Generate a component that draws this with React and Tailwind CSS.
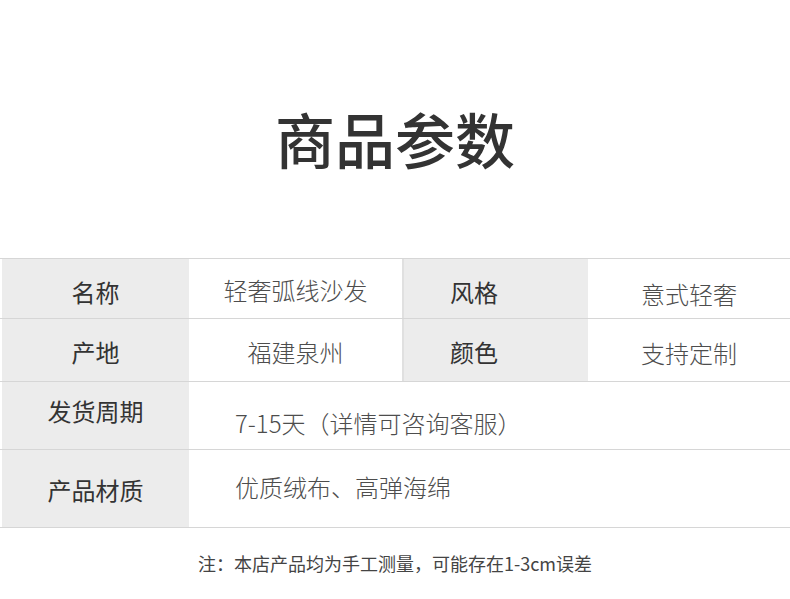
import React from 'react';

const font = { fontFamily: '"Noto Sans CJK SC", "Noto Sans", sans-serif' };

const App = () => {
  return (
    <div style={font} className="w-[790px] h-[599px] bg-white overflow-hidden text-[#333]">
      {/* Title */}
      <div className="h-[258px] pt-[108px] text-center">
        <h1 className="text-[60px] leading-none font-medium text-[#333]">商品参数</h1>
      </div>

      {/* Params table */}
      <div className="border-t border-[#d6d6d6]">
        {/* row 1 */}
        <div className="flex h-[60px] border-b border-[#d6d6d6]">
          <div className="ml-[2px] w-[187px] bg-[#ececec] flex items-center justify-center pt-[7px] text-[24px]">名称</div>
          <div className="w-[213px] flex items-center justify-center pt-[2px] text-[24px] font-light text-[#4d4d4d]">轻奢弧线沙发</div>
          <div className="w-[2px] bg-[#e0e0e0]"></div>
          <div className="w-[184px] bg-[#ececec] flex items-center pl-[46px] pt-[7px] text-[24px]">风格</div>
          <div className="flex-1 flex items-center justify-center pt-[11px] text-[24px] font-light text-[#4d4d4d]">意式轻奢</div>
        </div>
        {/* row 2 */}
        <div className="flex h-[63px] border-b border-[#d6d6d6]">
          <div className="ml-[2px] w-[187px] bg-[#ececec] flex items-center justify-center pt-[4px] text-[24px]">产地</div>
          <div className="w-[213px] flex items-center justify-center pt-[4px] text-[24px] font-light text-[#4d4d4d]">福建泉州</div>
          <div className="w-[2px] bg-[#e0e0e0]"></div>
          <div className="w-[184px] bg-[#ececec] flex items-center pl-[46px] pt-[4px] text-[24px]">颜色</div>
          <div className="flex-1 flex items-center justify-center pt-[6px] text-[24px] font-light text-[#4d4d4d]">支持定制</div>
        </div>
        {/* row 3 */}
        <div className="flex h-[68px] border-b border-[#d6d6d6]">
          <div className="ml-[2px] w-[187px] bg-[#ececec] flex items-center justify-center pb-[10px] text-[24px]">发货周期</div>
          <div className="flex-1 flex items-center pl-[46px] pt-[15px] text-[24px] font-light text-[#4d4d4d]">7-15天（详情可咨询客服）</div>
        </div>
        {/* row 4 */}
        <div className="flex h-[78px] border-b border-[#d6d6d6]">
          <div className="ml-[2px] w-[187px] bg-[#ececec] flex items-center justify-center pt-[2px] text-[24px]">产品材质</div>
          <div className="flex-1 flex items-center pl-[46px] pb-[4px] text-[24px] font-light text-[#4d4d4d]">优质绒布、高弹海绵</div>
        </div>
      </div>

      {/* Note */}
      <p className="mt-[26px] text-center text-[18px] leading-none text-[#444]">注：本店产品均为手工测量，可能存在1-3cm误差</p>
    </div>
  );
};

export default App;
